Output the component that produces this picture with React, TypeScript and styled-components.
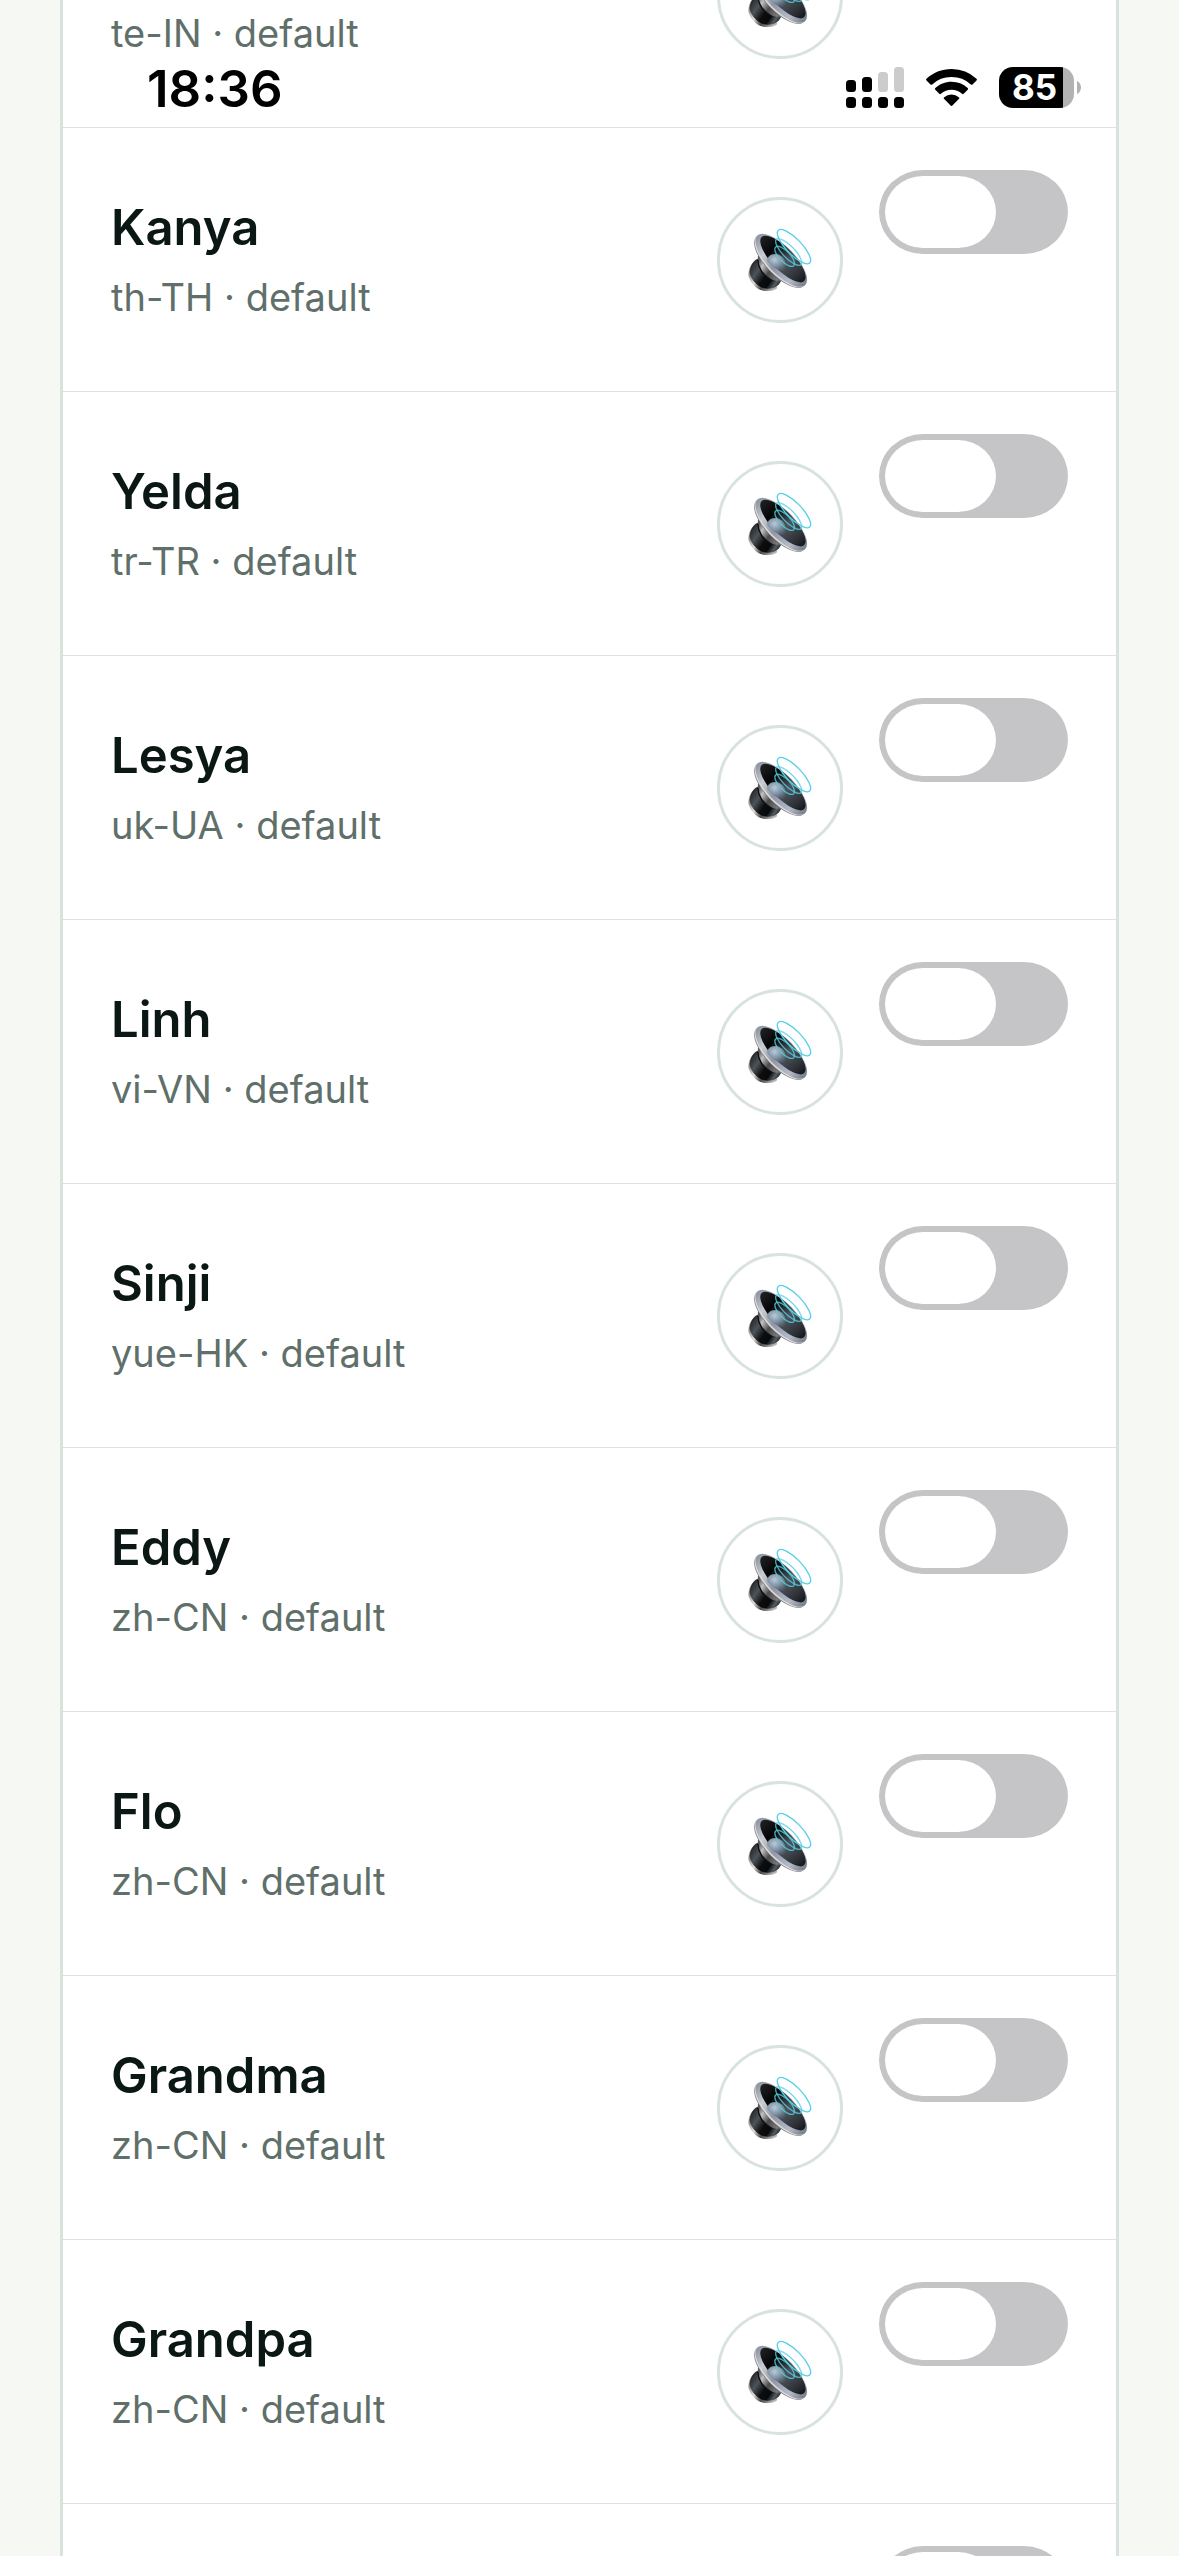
import { memo, useState } from "react";
import styled, { createGlobalStyle } from "styled-components";

// Data
const VOICES = [
  { name: "Geeta", locale: "te-IN" },
  { name: "Kanya", locale: "th-TH" },
  { name: "Yelda", locale: "tr-TR" },
  { name: "Lesya", locale: "uk-UA" },
  { name: "Linh", locale: "vi-VN" },
  { name: "Sinji", locale: "yue-HK" },
  { name: "Eddy", locale: "zh-CN" },
  { name: "Flo", locale: "zh-CN" },
  { name: "Grandma", locale: "zh-CN" },
  { name: "Grandpa", locale: "zh-CN" },
  { name: "Reed", locale: "zh-CN" },
];

const GlobalStyle = createGlobalStyle`
  *, *::before {
    box-sizing: border-box;
  }
  body {
    margin: 0;
    background: #f6f8f3;
    color: #0b1714;
    font-family: Inter, "Liberation Sans", sans-serif;
  }
`;

const Screen = styled.div`
  position: relative;
  height: 100vh;
  overflow: hidden;
  padding: 0 60px;
`;

const StatusBar = styled.header`
  position: absolute;
  top: 0;
  left: 0;
  right: 0;
  z-index: 1;
  display: flex;
  align-items: center;
  justify-content: space-between;
  padding: 48px 98px 0 147px;
  color: #000;
`;

const Time = styled.time`
  font-size: 51px;
  line-height: 82px;
  font-weight: 600;
`;

const StatusIcons = styled.div`
  display: flex;
  align-items: center;
  gap: 22px;
  padding-bottom: 3px;

  svg {
    display: block;
  }
`;

const Battery = styled.div`
  display: flex;
  align-items: center;
  gap: 3px;
`;

const BatteryLevel = styled.span`
  width: 75px;
  border-radius: 14px;
  background: linear-gradient(to right, #000 64px, #b2b2b2 64px);
  padding-right: 4px;
  color: #fff;
  font-size: 35px;
  line-height: 41px;
  font-weight: 700;
  text-align: center;
`;

// the list is scrolled part of a row up
const VoiceList = styled.ul`
  margin: -136px 0 0;
  padding: 0;
  list-style: none;
  background: #fff;
  border: solid #d8e3de;
  border-width: 0 3px;
`;

const VoiceRow = styled.li`
  display: flex;
  align-items: center;
  gap: 36px;
  min-height: 264px;
  padding: 42px 48px;
  border-bottom: 1px solid #d8e3de;
`;

const VoiceLabel = styled.label`
  flex: 1;
  display: flex;
  flex-direction: column;
  gap: 2px;
`;

const VoiceName = styled.span`
  font-size: 49px;
  line-height: 72px;
  font-weight: 600;
`;

const VoiceMeta = styled.span`
  color: #5f6f6a;
  font-size: 38px;
  line-height: 62px;
`;

const PreviewButton = styled.button`
  display: flex;
  align-items: center;
  justify-content: center;
  width: 126px;
  height: 126px;
  padding: 0;
  border: 3px solid #d8e3de;
  border-radius: 50%;
  background: #fff;
  cursor: pointer;
`;

const Switch = styled.input`
  appearance: none;
  align-self: flex-start;
  display: flex;
  width: 189px;
  height: 84px;
  margin: 0;
  padding: 6px;
  border-radius: 44px / 42px;
  background: #c5c5c7;
  cursor: pointer;

  &::before {
    content: "";
    width: 111px;
    height: 72px;
    border-radius: 38px / 36px;
    background: #fff;
  }

  &:checked {
    justify-content: flex-end;
    background: #34c759;
  }
`;

const SignalIcon = () => (
  <svg width="58" height="41" viewBox="0 0 58 41" aria-hidden="true">
    <rect x="0" y="13" width="10" height="12" rx="3.5" />
    <rect x="16" y="10" width="10" height="15" rx="3.5" />
    <rect x="32" y="5" width="10" height="20" rx="3.5" fill="#ccc" />
    <rect x="48" y="0" width="10" height="25" rx="3.5" fill="#ccc" />
    {[0, 16, 32, 48].map((x) => (
      <rect key={x} x={x} y="30" width="10" height="11" rx="3.5" />
    ))}
  </svg>
);

const WifiIcon = () => (
  <svg width="51" height="37" viewBox="0 0 51 37" aria-hidden="true">
    <path d="M25.5 0C15.800 0 7 3.700.500 9.700a1.200 1.200 0 0 0 0 1.700l4 4a1.200 1.200 0 0 0 1.700 0A28.200 28.200 0 0 1 25.500 8a28.200 28.200 0 0 1 19.300 7.400 1.200 1.200 0 0 0 1.700 0l4-4a1.200 1.200 0 0 0 0-1.700A36.700 36.700 0 0 0 25.500 0z" />
    <path d="M25.500 12.800c-6.300 0-12 2.400-16.200 6.300a1.200 1.200 0 0 0 0 1.700l4 4a1.200 1.200 0 0 0 1.700 0 15.500 15.500 0 0 1 21 0 1.200 1.200 0 0 0 1.700 0l4-4a1.200 1.200 0 0 0 0-1.700 23.900 23.900 0 0 0-16.200-6.300z" />
    <path d="M25.500 25.600a11 11 0 0 0-7.300 2.700 1.200 1.200 0 0 0 0 1.800l6.400 6.400a1.200 1.200 0 0 0 1.800 0l6.400-6.400a1.200 1.200 0 0 0 0-1.800 11 11 0 0 0-7.300-2.700z" />
  </svg>
);

const BatteryCap = () => (
  <svg width="4" height="13" viewBox="0 0 4 13" aria-hidden="true">
    <path d="M0 0c2.400 1 4 3.600 4 6.500S2.400 12 0 13z" fill="#b2b2b2" />
  </svg>
);

const SpeakerIcon = () => (
  <svg width="68" height="68" viewBox="138 138 204 204" aria-hidden="true">
    <use href="#speaker" />
  </svg>
);

// Shared by every preview button
const SpeakerSprite = () => (
  <svg width="0" height="0" display="block" aria-hidden="true">
    <defs>
      <linearGradient id="magnet" x1="148" y1="262" x2="238" y2="322" gradientUnits="userSpaceOnUse">
        <stop offset="0" stopColor="#24282c" />
        <stop offset="0.25" stopColor="#4d5359" />
        <stop offset="0.5" stopColor="#0c0d0f" />
        <stop offset="0.7" stopColor="#08090a" />
        <stop offset="0.85" stopColor="#555c64" />
        <stop offset="1" stopColor="#191b1e" />
      </linearGradient>
      <linearGradient id="plate" x1="145" y1="280" x2="215" y2="335" gradientUnits="userSpaceOnUse">
        <stop offset="0" stopColor="#8f8f90" />
        <stop offset="0.35" stopColor="#e0dfde" />
        <stop offset="0.65" stopColor="#484848" />
        <stop offset="1" stopColor="#b8b6b4" />
      </linearGradient>
      <linearGradient id="basket" x1="176" y1="238" x2="262" y2="302" gradientUnits="userSpaceOnUse">
        <stop offset="0" stopColor="#55565a" />
        <stop offset="0.2" stopColor="#c2c0bf" />
        <stop offset="0.45" stopColor="#4a4a4c" />
        <stop offset="0.75" stopColor="#77787a" />
        <stop offset="1" stopColor="#3a3b3e" />
      </linearGradient>
      <linearGradient id="rim" x1="140" y1="0" x2="345" y2="0" gradientUnits="userSpaceOnUse">
        <stop offset="0" stopColor="#8b93a2" />
        <stop offset="0.25" stopColor="#c9ccd6" />
        <stop offset="0.5" stopColor="#8e97a6" />
        <stop offset="0.8" stopColor="#b4bac8" />
        <stop offset="1" stopColor="#727c8d" />
      </linearGradient>
      <linearGradient id="cone" x1="155" y1="0" x2="340" y2="0" gradientUnits="userSpaceOnUse">
        <stop offset="0" stopColor="#1c1e20" />
        <stop offset="0.25" stopColor="#050606" />
        <stop offset="0.55" stopColor="#4d545b" />
        <stop offset="0.8" stopColor="#2f3439" />
        <stop offset="1" stopColor="#111315" />
      </linearGradient>
      <radialGradient id="dome" cx="0.4" cy="0.35" r="0.7">
        <stop offset="0" stopColor="#b9c9d8" />
        <stop offset="0.55" stopColor="#8192a3" />
        <stop offset="1" stopColor="#505d6a" />
      </radialGradient>
    </defs>
    <g id="speaker">
      <path d="M160 250C148 258 144 275 146 290C152 310 174 332 196 333C214 334 226 331 232 324L222 300L176 254Z" fill="url(#plate)" />
      <path d="M178 234C160 240 149 256 149 281C156 304 178 325 201 326C219 327 236 320 243 303L238 286L190 240Z" fill="url(#magnet)" />
      <path d="M174 228C171 250 184 279 209 295C224 305 240 305 246 300C252 294 262 290 280 300L200 215Z" fill="url(#basket)" />
      <path d="M174 240C174 262 188 285 207 296" fill="none" stroke="#0e0f10" strokeWidth="4" />
      <g transform="rotate(46 241 242)">
        <ellipse cx="242" cy="244" rx="103" ry="43" fill="#77716f" />
        <ellipse cx="242" cy="242" rx="103" ry="43" fill="#dcdad9" />
        <ellipse cx="242" cy="239" rx="103" ry="41" fill="url(#rim)" />
        <ellipse cx="243" cy="233" rx="92" ry="33" fill="url(#cone)" />
      </g>
      <path d="M202 244C199 232 211 222 226 222C246 223 260 240 257 260C256 266 252 270 246 271C229 269 211 258 202 244Z" fill="url(#dome)" />
      <g fill="none" stroke="#55d0e4" strokeWidth="4">
        <ellipse cx="282" cy="200" rx="68" ry="23" transform="rotate(46 282 200)" />
        <ellipse cx="266" cy="216" rx="53" ry="18" transform="rotate(46 266 216)" strokeOpacity="0.8" />
        <ellipse cx="254" cy="229" rx="39" ry="16" transform="rotate(46 254 229)" strokeOpacity="0.8" />
      </g>
    </g>
  </svg>
);

const Voice = ({ id, name, locale }: { id: string; name: string; locale: string }) => {
  const [enabled, setEnabled] = useState(false);

  return (
    <VoiceRow>
      <VoiceLabel htmlFor={id}>
        <VoiceName>{name}</VoiceName>
        <VoiceMeta>{locale} · default</VoiceMeta>
      </VoiceLabel>
      <PreviewButton type="button" aria-label={`Play ${name}`}>
        <SpeakerIcon />
      </PreviewButton>
      <Switch
        id={id}
        type="checkbox"
        role="switch"
        checked={enabled}
        onChange={(e) => setEnabled(e.target.checked)}
      />
    </VoiceRow>
  );
};

const App = () => {
  return (
    <>
      <GlobalStyle />
      <SpeakerSprite />
      <Screen>
        <StatusBar>
          <Time>18:36</Time>
          <StatusIcons>
            <SignalIcon />
            <WifiIcon />
            <Battery>
              <BatteryLevel>85</BatteryLevel>
              <BatteryCap />
            </Battery>
          </StatusIcons>
        </StatusBar>
        <VoiceList>
          {VOICES.map(({ name, locale }) => (
            <Voice key={name} id={`voice-${name}`} name={name} locale={locale} />
          ))}
        </VoiceList>
      </Screen>
    </>
  );
};

export default memo(App);
